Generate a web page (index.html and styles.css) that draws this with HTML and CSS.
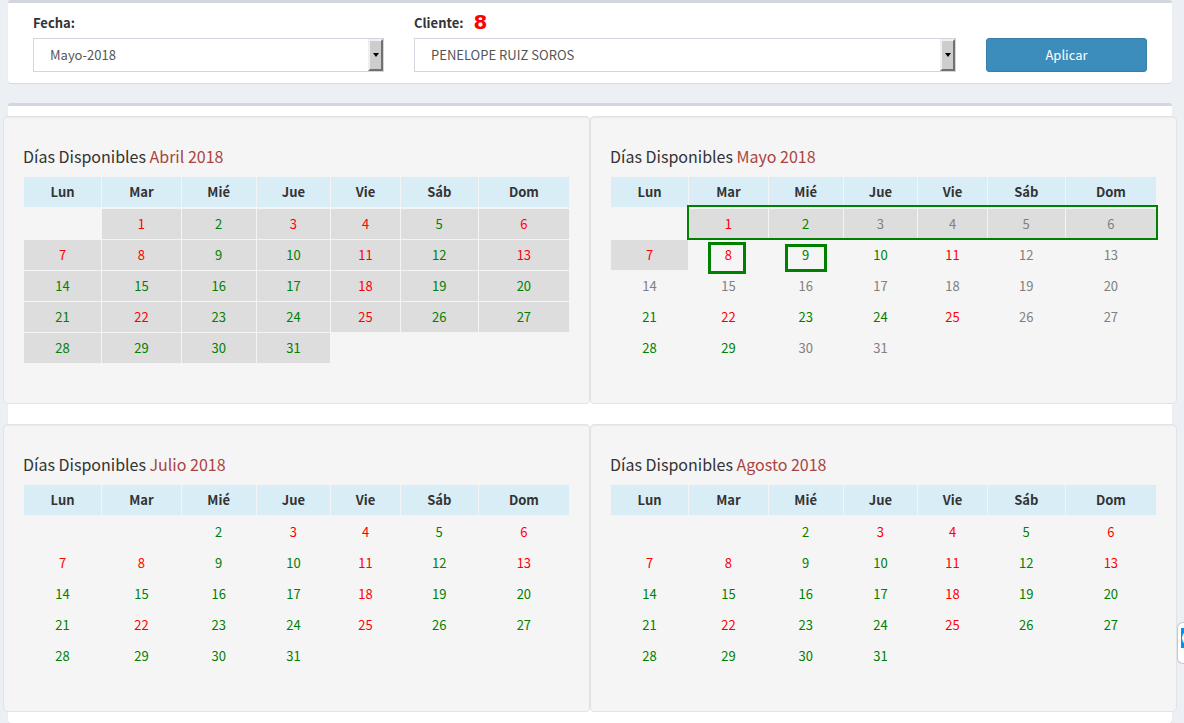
FILE: index.html
```html
<!DOCTYPE html>
<html lang="es">
<head>
<meta charset="utf-8">
<title>Días Disponibles</title>
<link rel="stylesheet" href="styles.css">
</head>
<body>
<main class="content">
  <form class="box filters">
    <div class="field">
      <label class="label" for="fecha">Fecha:</label>
      <div class="picker"><select id="fecha" class="select"><option>Mayo-2018</option></select><span class="arrow"></span></div>
    </div>
    <div class="field">
      <div class="label-row"><label class="label" for="cliente">Cliente:</label><strong class="mark">8</strong></div>
      <div class="picker"><select id="cliente" class="select"><option>PENELOPE RUIZ SOROS</option></select><span class="arrow"></span></div>
    </div>
    <button type="button" class="apply">Aplicar</button>
  </form>

  <section class="box calendars">
    <div class="grid">
      <article class="well">
        <h4 class="title">Días Disponibles <span class="month">Abril 2018</span></h4>
        <div class="calendar">
          <table class="days">
            <colgroup><col class="c1"><col class="c2"><col class="c3"><col class="c4"><col class="c5"><col class="c6"><col class="c7"></colgroup>
            <thead><tr><th>Lun</th><th>Mar</th><th>Mié</th><th>Jue</th><th>Vie</th><th>Sáb</th><th>Dom</th></tr></thead>
            <tbody class="past">
              <tr><td></td><td class="busy">1</td><td class="free">2</td><td class="busy">3</td><td class="busy">4</td><td class="free">5</td><td class="busy">6</td></tr>
              <tr><td class="busy">7</td><td class="busy">8</td><td class="free">9</td><td class="free">10</td><td class="busy">11</td><td class="free">12</td><td class="busy">13</td></tr>
              <tr><td class="free">14</td><td class="free">15</td><td class="free">16</td><td class="free">17</td><td class="busy">18</td><td class="free">19</td><td class="free">20</td></tr>
              <tr><td class="free">21</td><td class="busy">22</td><td class="free">23</td><td class="free">24</td><td class="busy">25</td><td class="free">26</td><td class="free">27</td></tr>
              <tr><td class="free">28</td><td class="free">29</td><td class="free">30</td><td class="free">31</td><td></td><td></td><td></td></tr>
            </tbody>
          </table>
        </div>
      </article>

      <article class="well">
        <h4 class="title">Días Disponibles <span class="month">Mayo 2018</span></h4>
        <div class="calendar">
          <table class="days">
            <colgroup><col class="c1"><col class="c2"><col class="c3"><col class="c4"><col class="c5"><col class="c6"><col class="c7"></colgroup>
            <thead><tr><th>Lun</th><th>Mar</th><th>Mié</th><th>Jue</th><th>Vie</th><th>Sáb</th><th>Dom</th></tr></thead>
            <tbody>
              <tr class="past"><td></td><td class="busy">1</td><td class="free">2</td><td class="off">3</td><td class="off">4</td><td class="off">5</td><td class="off">6</td></tr>
              <tr><td class="busy shaded">7</td><td class="busy">8</td><td class="free">9</td><td class="free">10</td><td class="busy">11</td><td class="off">12</td><td class="off">13</td></tr>
              <tr><td class="off">14</td><td class="off">15</td><td class="off">16</td><td class="off">17</td><td class="off">18</td><td class="off">19</td><td class="off">20</td></tr>
              <tr><td class="free">21</td><td class="busy">22</td><td class="free">23</td><td class="free">24</td><td class="busy">25</td><td class="off">26</td><td class="off">27</td></tr>
              <tr><td class="free">28</td><td class="free">29</td><td class="off">30</td><td class="off">31</td><td></td><td></td><td></td></tr>
            </tbody>
          </table>
          <span class="outline outline-week"></span>
          <span class="outline outline-8"></span>
          <span class="outline outline-9"></span>
        </div>
      </article>

      <article class="well">
        <h4 class="title">Días Disponibles <span class="month">Julio 2018</span></h4>
        <div class="calendar">
          <table class="days">
            <colgroup><col class="c1"><col class="c2"><col class="c3"><col class="c4"><col class="c5"><col class="c6"><col class="c7"></colgroup>
            <thead><tr><th>Lun</th><th>Mar</th><th>Mié</th><th>Jue</th><th>Vie</th><th>Sáb</th><th>Dom</th></tr></thead>
            <tbody>
              <tr><td></td><td></td><td class="free">2</td><td class="busy">3</td><td class="busy">4</td><td class="free">5</td><td class="busy">6</td></tr>
              <tr><td class="busy">7</td><td class="busy">8</td><td class="free">9</td><td class="free">10</td><td class="busy">11</td><td class="free">12</td><td class="busy">13</td></tr>
              <tr><td class="free">14</td><td class="free">15</td><td class="free">16</td><td class="free">17</td><td class="busy">18</td><td class="free">19</td><td class="free">20</td></tr>
              <tr><td class="free">21</td><td class="busy">22</td><td class="free">23</td><td class="free">24</td><td class="busy">25</td><td class="free">26</td><td class="free">27</td></tr>
              <tr><td class="free">28</td><td class="free">29</td><td class="free">30</td><td class="free">31</td><td></td><td></td><td></td></tr>
            </tbody>
          </table>
        </div>
      </article>

      <article class="well">
        <h4 class="title">Días Disponibles <span class="month">Agosto 2018</span></h4>
        <div class="calendar">
          <table class="days">
            <colgroup><col class="c1"><col class="c2"><col class="c3"><col class="c4"><col class="c5"><col class="c6"><col class="c7"></colgroup>
            <thead><tr><th>Lun</th><th>Mar</th><th>Mié</th><th>Jue</th><th>Vie</th><th>Sáb</th><th>Dom</th></tr></thead>
            <tbody>
              <tr><td></td><td></td><td class="free">2</td><td class="busy">3</td><td class="busy">4</td><td class="free">5</td><td class="busy">6</td></tr>
              <tr><td class="busy">7</td><td class="busy">8</td><td class="free">9</td><td class="free">10</td><td class="busy">11</td><td class="free">12</td><td class="busy">13</td></tr>
              <tr><td class="free">14</td><td class="free">15</td><td class="free">16</td><td class="free">17</td><td class="busy">18</td><td class="free">19</td><td class="free">20</td></tr>
              <tr><td class="free">21</td><td class="busy">22</td><td class="free">23</td><td class="free">24</td><td class="busy">25</td><td class="free">26</td><td class="free">27</td></tr>
              <tr><td class="free">28</td><td class="free">29</td><td class="free">30</td><td class="free">31</td><td></td><td></td><td></td></tr>
            </tbody>
          </table>
        </div>
      </article>
    </div>
  </section>
</main>
<aside class="side-tab">
  <svg width="3" height="20" viewBox="0 0 3 20"><rect width="3" height="20" fill="#0a8fee"/><path d="M3 5Q1 7 1 10T3 15Z" fill="#fff"/></svg>
</aside>
</body>
</html>
```

FILE: styles.css
```css
* { box-sizing: border-box; }

body {
  margin: 0;
  background: #ecf0f5;
  color: #333;
  font: 13px/20px "Noto Sans CJK SC", "Open Sans", sans-serif;
}

.content { padding: 0 12px 0 8px; }

.box {
  background: #fff;
  border-top: 3px solid #d2d6de;
  border-radius: 3px;
  box-shadow: 0 1px 1px rgba(0, 0, 0, 0.1);
}

.filters {
  display: grid;
  grid-template-columns: 351fr 542fr 161fr;
  gap: 30px;
  align-items: end;
  margin-bottom: 20px;
  padding: 10px 25px 11px;
}

.label {
  display: block;
  margin-bottom: 5px;
  font-weight: 700;
}

.label-row {
  display: flex;
  gap: 10px;
}

.mark {
  color: #f00;
  font: bold 20px/18px "DejaVu Sans", sans-serif;
}

.picker { position: relative; }

.select {
  display: block;
  appearance: none;
  width: 100%;
  height: 34px;
  padding: 0 32px 0 16px;
  border: 1px solid #d2d6de;
  border-radius: 0;
  background: #fff;
  color: #555;
  font: inherit;
}

.arrow {
  position: absolute;
  top: 1px;
  right: 1px;
  bottom: 1px;
  display: flex;
  align-items: center;
  justify-content: center;
  width: 15px;
  border: 2px solid;
  border-color: #f0f0f0 #707070 #707070 #f0f0f0;
  background: #cdcdcd;
  pointer-events: none;
}

.arrow::before {
  content: "";
  border: 3px solid transparent;
  border-top: 4px solid #000;
  border-bottom: 0;
}

.apply {
  height: 34px;
  border: 1px solid #367fa9;
  border-radius: 3px;
  background: #3c8dbc;
  color: #fff;
  font: inherit;
}

.calendars { padding: 10px 0 11px; }

.grid {
  display: grid;
  grid-template-columns: 1fr 1fr;
  row-gap: 20px;
  margin: 0 -5px;
}

.well {
  min-width: 0;
  padding: 29px 19px 39px;
  border: 1px solid #e3e3e3;
  border-radius: 4px;
  background: #f5f5f5;
  box-shadow: inset 0 1px 1px rgba(0, 0, 0, 0.05);
}

.title {
  margin: 0 0 10px;
  font-size: 16px;
  font-weight: 400;
  line-height: 20px;
}

.month { color: #a94442; }

.calendar { position: relative; }

.days {
  width: 100%;
  border-collapse: collapse;
  table-layout: fixed;
  border: 1px solid #f4f4f4;
}

.c1 { width: 14.3%; }
.c2 { width: 14.6%; }
.c3 { width: 13.7%; }
.c4 { width: 13.7%; }
.c5 { width: 12.7%; }
.c6 { width: 14.3%; }
.c7 { width: 16.7%; }

.days th,
.days td {
  height: 31px;
  padding: 5px;
  border: 1px solid #f4f4f4;
  text-align: center;
}

.days th {
  border-bottom-width: 2px;
  background: #d9edf7;
  font-weight: 700;
}

.past td:not(:empty),
.shaded { background: #ddd; }

.busy { color: #f00; }
.free { color: #008000; }
.off { color: #808080; }

.outline {
  position: absolute;
  border: 3px solid #008000;
}

.outline-week {
  top: 29px;
  right: -1px;
  left: 14%;
  height: 35px;
  border-width: 2px;
}

.outline-8 {
  top: 66px;
  left: 18%;
  width: 38px;
  height: 32px;
}

.outline-9 {
  top: 68px;
  left: 32%;
  width: 42px;
  height: 28px;
}

.side-tab {
  position: fixed;
  top: 622px;
  right: 0;
  width: 7px;
  height: 42px;
  padding: 5px 0 0 3px;
  border: 1px solid #c4c8cc;
  border-right: 0;
  border-radius: 6px 0 0 6px;
  background: #fff;
}

.side-tab svg { display: block; }
```
